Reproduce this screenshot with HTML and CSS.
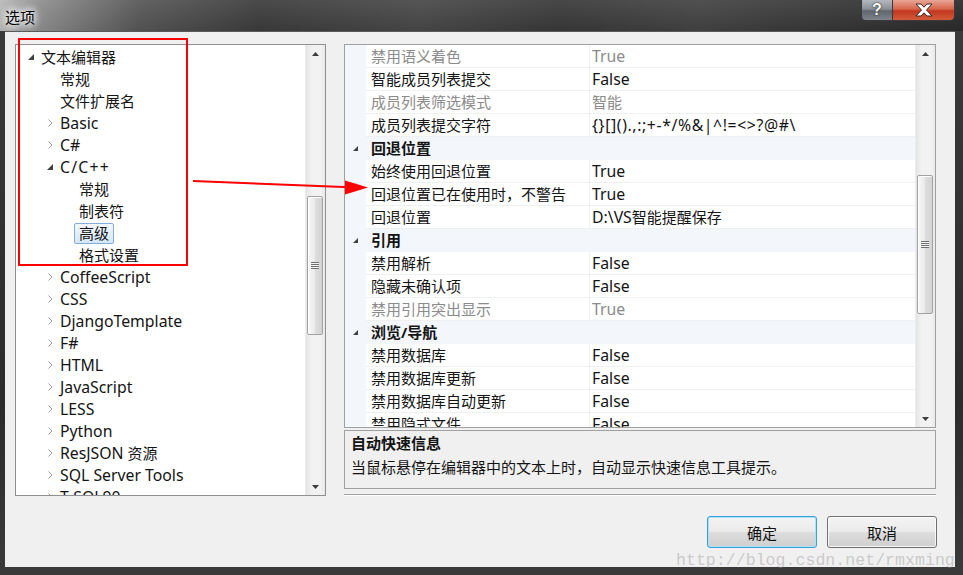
FILE: index.html
```html
<!DOCTYPE html>
<html lang="zh-CN">
<head>
<meta charset="utf-8">
<title>选项</title>
<link rel="stylesheet" href="styles.css">
</head>
<body>
<div class="window">
  <div class="titlebar">
    <span class="title">选项</span>
    <div class="caps">
      <div class="cap-help">?</div>
      <div class="cap-close">
        <svg width="20" height="14" viewBox="0 0 20 14"><path d="M2 1h5l3 3.2 3-3.2h5l-5.5 6 5.5 6h-5l-3-3.2-3 3.2h-5l5.5-6z" fill="#fff" stroke="#3a2a28" stroke-width="1"/></svg>
      </div>
    </div>
  </div>
  <div class="frame">
    <div class="client">
      <div class="main">
        <div class="tree-panel">
          <div class="tree">
            <div class="row l0"><span class="exp"><svg width="6" height="6" viewBox="0 0 6 6"><polygon points="6,0 6,6 0,6" fill="#404040"/></svg></span><span class="lbl">文本编辑器</span></div>
            <div class="row l1"><span class="exp"></span><span class="lbl">常规</span></div>
            <div class="row l1"><span class="exp"></span><span class="lbl">文件扩展名</span></div>
            <div class="row l1"><span class="exp"><svg class="chev" width="5" height="8" viewBox="0 0 5 8"><polyline points="0.5,0.5 4,4 0.5,7.5" fill="none" stroke="#9a9a9a" stroke-width="1"/></svg></span><span class="lbl en">Basic</span></div>
            <div class="row l1"><span class="exp"><svg class="chev" width="5" height="8" viewBox="0 0 5 8"><polyline points="0.5,0.5 4,4 0.5,7.5" fill="none" stroke="#9a9a9a" stroke-width="1"/></svg></span><span class="lbl en">C#</span></div>
            <div class="row l1"><span class="exp"><svg width="6" height="6" viewBox="0 0 6 6"><polygon points="6,0 6,6 0,6" fill="#404040"/></svg></span><span class="lbl en wide">C/C++</span></div>
            <div class="row l2"><span class="exp"></span><span class="lbl">常规</span></div>
            <div class="row l2"><span class="exp"></span><span class="lbl">制表符</span></div>
            <div class="row l2"><span class="exp"></span><span class="lbl selected">高级</span></div>
            <div class="row l2"><span class="exp"></span><span class="lbl">格式设置</span></div>
            <div class="row l1"><span class="exp"><svg class="chev" width="5" height="8" viewBox="0 0 5 8"><polyline points="0.5,0.5 4,4 0.5,7.5" fill="none" stroke="#9a9a9a" stroke-width="1"/></svg></span><span class="lbl en">CoffeeScript</span></div>
            <div class="row l1"><span class="exp"><svg class="chev" width="5" height="8" viewBox="0 0 5 8"><polyline points="0.5,0.5 4,4 0.5,7.5" fill="none" stroke="#9a9a9a" stroke-width="1"/></svg></span><span class="lbl en">CSS</span></div>
            <div class="row l1"><span class="exp"><svg class="chev" width="5" height="8" viewBox="0 0 5 8"><polyline points="0.5,0.5 4,4 0.5,7.5" fill="none" stroke="#9a9a9a" stroke-width="1"/></svg></span><span class="lbl en">DjangoTemplate</span></div>
            <div class="row l1"><span class="exp"><svg class="chev" width="5" height="8" viewBox="0 0 5 8"><polyline points="0.5,0.5 4,4 0.5,7.5" fill="none" stroke="#9a9a9a" stroke-width="1"/></svg></span><span class="lbl en">F#</span></div>
            <div class="row l1"><span class="exp"><svg class="chev" width="5" height="8" viewBox="0 0 5 8"><polyline points="0.5,0.5 4,4 0.5,7.5" fill="none" stroke="#9a9a9a" stroke-width="1"/></svg></span><span class="lbl en">HTML</span></div>
            <div class="row l1"><span class="exp"><svg class="chev" width="5" height="8" viewBox="0 0 5 8"><polyline points="0.5,0.5 4,4 0.5,7.5" fill="none" stroke="#9a9a9a" stroke-width="1"/></svg></span><span class="lbl en">JavaScript</span></div>
            <div class="row l1"><span class="exp"><svg class="chev" width="5" height="8" viewBox="0 0 5 8"><polyline points="0.5,0.5 4,4 0.5,7.5" fill="none" stroke="#9a9a9a" stroke-width="1"/></svg></span><span class="lbl en">LESS</span></div>
            <div class="row l1"><span class="exp"><svg class="chev" width="5" height="8" viewBox="0 0 5 8"><polyline points="0.5,0.5 4,4 0.5,7.5" fill="none" stroke="#9a9a9a" stroke-width="1"/></svg></span><span class="lbl en">Python</span></div>
            <div class="row l1"><span class="exp"><svg class="chev" width="5" height="8" viewBox="0 0 5 8"><polyline points="0.5,0.5 4,4 0.5,7.5" fill="none" stroke="#9a9a9a" stroke-width="1"/></svg></span><span class="lbl"><span class="en">ResJSON</span> 资源</span></div>
            <div class="row l1"><span class="exp"><svg class="chev" width="5" height="8" viewBox="0 0 5 8"><polyline points="0.5,0.5 4,4 0.5,7.5" fill="none" stroke="#9a9a9a" stroke-width="1"/></svg></span><span class="lbl en">SQL Server Tools</span></div>
            <div class="row l1"><span class="exp"><svg class="chev" width="5" height="8" viewBox="0 0 5 8"><polyline points="0.5,0.5 4,4 0.5,7.5" fill="none" stroke="#9a9a9a" stroke-width="1"/></svg></span><span class="lbl en">T-SQL90</span></div>
          </div>
          <div class="vscroll">
            <div class="sb-btn"><svg width="7" height="4" viewBox="0 0 7 4"><polygon points="3.5,0 7,4 0,4" fill="#3d3d3d"/></svg></div>
            <div class="sb-track">
              <div class="thumb tree-thumb"><span class="grip"></span></div>
            </div>
            <div class="sb-btn"><svg width="7" height="4" viewBox="0 0 7 4"><polygon points="0,0 7,0 3.5,4" fill="#3d3d3d"/></svg></div>
          </div>
        </div>
        <div class="right">
          <div class="grid-panel">
            <div class="grid">
              <div class="prow dis"><div class="gut"></div><div class="name">禁用语义着色</div><div class="val en">True</div></div>
              <div class="prow"><div class="gut"></div><div class="name">智能成员列表提交</div><div class="val en">False</div></div>
              <div class="prow dis"><div class="gut"></div><div class="name">成员列表筛选模式</div><div class="val">智能</div></div>
              <div class="prow"><div class="gut"></div><div class="name">成员列表提交字符</div><div class="val en sym">{}[]().,:;+-*/%&amp;|^!=&lt;&gt;?@#\</div></div>
              <div class="crow"><div class="gut"><svg width="5" height="5" viewBox="0 0 5 5"><polygon points="5,0 5,5 0,5" fill="#404040"/></svg></div><div class="cname">回退位置</div></div>
              <div class="prow"><div class="gut"></div><div class="name">始终使用回退位置</div><div class="val en">True</div></div>
              <div class="prow"><div class="gut"></div><div class="name">回退位置已在使用时，不警告</div><div class="val en">True</div></div>
              <div class="prow"><div class="gut"></div><div class="name">回退位置</div><div class="val"><span class="en">D:\VS</span>智能提醒保存</div></div>
              <div class="crow"><div class="gut"><svg width="5" height="5" viewBox="0 0 5 5"><polygon points="5,0 5,5 0,5" fill="#404040"/></svg></div><div class="cname">引用</div></div>
              <div class="prow"><div class="gut"></div><div class="name">禁用解析</div><div class="val en">False</div></div>
              <div class="prow"><div class="gut"></div><div class="name">隐藏未确认项</div><div class="val en">False</div></div>
              <div class="prow dis"><div class="gut"></div><div class="name">禁用引用突出显示</div><div class="val en">True</div></div>
              <div class="crow"><div class="gut"><svg width="5" height="5" viewBox="0 0 5 5"><polygon points="5,0 5,5 0,5" fill="#404040"/></svg></div><div class="cname">浏览/导航</div></div>
              <div class="prow"><div class="gut"></div><div class="name">禁用数据库</div><div class="val en">False</div></div>
              <div class="prow"><div class="gut"></div><div class="name">禁用数据库更新</div><div class="val en">False</div></div>
              <div class="prow"><div class="gut"></div><div class="name">禁用数据库自动更新</div><div class="val en">False</div></div>
              <div class="prow"><div class="gut"></div><div class="name">禁用隐式文件</div><div class="val en">False</div></div>
            </div>
            <div class="vscroll">
              <div class="sb-btn"><svg width="7" height="4" viewBox="0 0 7 4"><polygon points="3.5,0 7,4 0,4" fill="#3d3d3d"/></svg></div>
              <div class="sb-track">
                <div class="thumb grid-thumb"><span class="grip"></span></div>
              </div>
              <div class="sb-btn"><svg width="7" height="4" viewBox="0 0 7 4"><polygon points="0,0 7,0 3.5,4" fill="#3d3d3d"/></svg></div>
            </div>
          </div>
          <div class="desc">
            <div class="desc-title">自动快速信息</div>
            <div class="desc-text">当鼠标悬停在编辑器中的文本上时，自动显示快速信息工具提示。</div>
          </div>
          <div class="sep"></div>
        </div>
      </div>
      <div class="buttons">
        <button class="btn default">确定</button>
        <button class="btn">取消</button>
      </div>
    </div>
  </div>
  <div class="watermark">http://blog.csdn.net/rmxming</div>
  <div class="annot-rect"></div>
  <svg class="annot-arrow" width="963" height="575" viewBox="0 0 963 575">
    <line x1="193" y1="181" x2="350" y2="187.3" stroke="#f00" stroke-width="2"/>
    <polygon points="345,180.5 368,187.5 345,194.5" fill="#f00"/>
  </svg>
</div>
</body>
</html>
```
FILE: styles.css
```css
* { box-sizing: border-box; }

html, body {
  margin: 0;
  padding: 0;
}

body {
  width: 963px;
  height: 575px;
  overflow: hidden;
  background: #2d2d2d;
  font-family: "Noto Sans", "Noto Sans CJK SC", sans-serif;
  font-size: 15px;
  color: #141414;
}

.en { font-size: 15.8px; }
.wide { letter-spacing: 1.2px; }
.sym { letter-spacing: 0.6px; }

.window {
  position: relative;
  width: 963px;
  height: 575px;
  display: flex;
  flex-direction: column;
  background: linear-gradient(to bottom, #3b3b3b, #2c2c2c 70%, #3a3a3a);
}

.titlebar {
  height: 31px;
  flex: none;
  display: flex;
  justify-content: space-between;
  align-items: flex-start;
  padding: 0 8px 0 5px;
  background:
    linear-gradient(to bottom, rgba(255,255,255,0.08), rgba(0,0,0,0.05)),
    linear-gradient(to right, #b9b9b9 0px, #8d8d8d 40px, #555 140px, #3b3b3b 260px, #474747 420px, #383838 560px, #424242 700px, #333 860px, #2a2a2a 963px);
}

.title {
  padding-top: 7px;
  line-height: 20px;
  font-size: 15px;
  color: #000;
  font-family: "Noto Sans CJK SC", sans-serif;
  text-shadow: 0 0 6px #fff, 0 0 8px #fff, 0 0 10px rgba(255,255,255,0.9);
}

.caps {
  display: flex;
  height: 21px;
  border: 1px solid #3a3a3a;
  border-top: none;
  border-radius: 0 0 5px 5px;
  overflow: hidden;
}

.cap-help {
  width: 31px;
  display: flex;
  justify-content: center;
  align-items: center;
  color: #fff;
  font-weight: bold;
  font-size: 16px;
  font-family: "Liberation Sans", sans-serif;
  text-shadow: 0 0 2px #333, 0 0 1px #222;
  background: linear-gradient(to bottom, #b4b9c0 0%, #8a9098 45%, #60666e 55%, #7e848c 100%);
  border-right: 1px solid #3a3a3a;
}

.cap-close {
  width: 61px;
  display: flex;
  justify-content: center;
  align-items: center;
  background: linear-gradient(to bottom, #e9a696 0%, #d7664b 45%, #c2371f 55%, #d45a3a 100%);
}

.frame {
  flex: 1;
  display: flex;
  padding: 0 8px 8px 5px;
}

.client {
  flex: 1;
  display: flex;
  flex-direction: column;
  background: #f0f0f0;
  border-top: 1px solid #5a5a5a;
  padding: 12px 19px 19px 10px;
}

.main {
  height: 452px;
  flex: none;
  display: flex;
  gap: 18px;
}

/* tree */
.tree-panel {
  width: 311px;
  flex: none;
  display: flex;
  background: #fff;
  border: 1px solid #8e9093;
}

.tree {
  flex: 1;
  overflow: hidden;
  padding-top: 1px;
}

.row {
  height: 22px;
  display: flex;
  align-items: center;
  white-space: nowrap;
}

.row.l0 { padding-left: 0; }
.row.l1 { padding-left: 19px; }
.row.l2 { padding-left: 38px; }

.exp {
  width: 20px;
  height: 22px;
  flex: none;
  display: flex;
  align-items: center;
  padding-left: 12px;
}

.exp .chev { margin-left: 1px; }

.lbl {
  height: 21px;
  line-height: 19px;
  padding: 0 4px;
  border: 1px solid transparent;
  border-radius: 2px;
}

.lbl.selected {
  border-color: #84acdd;
  background: linear-gradient(to bottom, #f1f7fe, #d5e7fc);
}

/* scrollbars */
.vscroll {
  width: 20px;
  flex: none;
  display: flex;
  flex-direction: column;
  background: linear-gradient(to right, #e4e4e4, #f2f2f2 30%, #f2f2f2 80%, #e9e9e9);
  border-left: 1px solid #ececec;
}

.sb-btn {
  height: 17px;
  flex: none;
  display: flex;
  align-items: center;
  justify-content: center;
}

.sb-track {
  flex: 1;
}

.thumb {
  margin: 0 2px 0 1px;
  border: 1px solid #a2a2a2;
  border-radius: 2px;
  background: linear-gradient(to right, #f6f6f6, #ececec 45%, #dcdcdc 55%, #d4d4d4);
  box-shadow: inset 1px 1px 0 #fff;
  display: flex;
  align-items: center;
  justify-content: center;
}

.tree-thumb { margin-top: 134px; height: 139px; }
.grid-thumb { margin-top: 113px; height: 139px; }

.grip {
  width: 8px;
  height: 7px;
  background: repeating-linear-gradient(to bottom, #6f6f6f 0, #6f6f6f 1px, #f4f4f4 1px, #f4f4f4 2px);
}

/* right column */
.right {
  flex: 1;
  display: flex;
  flex-direction: column;
}

.grid-panel {
  height: 384px;
  flex: none;
  display: flex;
  background: #fff;
  border: 1px solid #a0a0a0;
}

.grid {
  flex: 1;
  overflow: hidden;
}

.prow, .crow {
  height: 23px;
  display: flex;
  white-space: nowrap;
}

.gut {
  width: 21px;
  flex: none;
  background: #f3f6fb;
  display: flex;
  align-items: center;
  padding-left: 8px;
}

.name {
  width: 224px;
  flex: none;
  padding-left: 5px;
  line-height: 22px;
  border-right: 1px solid #f0f0f0;
  border-bottom: 1px solid #eff0f2;
}

.val {
  flex: 1;
  padding-left: 2px;
  line-height: 22px;
  border-bottom: 1px solid #eff0f2;
}

.prow.dis { color: #8b8b8b; }

.crow { background: #f3f6fb; }

.cname {
  flex: 1;
  padding-left: 5px;
  line-height: 23px;
  font-weight: bold;
}

.desc {
  margin-top: 2px;
  height: 59px;
  flex: none;
  border: 1px solid #a0a0a0;
  padding: 2px 6px;
}

.desc-title {
  font-weight: bold;
  line-height: 20px;
}

.desc-text {
  margin-top: 4px;
  line-height: 20px;
}

.sep {
  margin-top: 5px;
  height: 2px;
  flex: none;
  border-top: 1px solid #a0a0a0;
  border-bottom: 1px solid #fff;
}

.buttons {
  margin-top: 20px;
  display: flex;
  justify-content: flex-end;
  gap: 10px;
  margin-right: -1px;
}

.btn {
  width: 110px;
  height: 32px;
  font-family: "Noto Sans CJK SC", sans-serif;
  font-size: 15px;
  color: #111;
  border: 1px solid #707070;
  border-radius: 3px;
  background: linear-gradient(to bottom, #f3f3f3 0%, #ebebeb 48%, #dddddd 52%, #cfcfcf 100%);
  box-shadow: inset 0 0 0 1px rgba(255,255,255,0.8);
  padding: 0;
}

.btn.default {
  border-color: #3c9fd8;
  box-shadow: inset 0 0 0 1px #a8e3fb;
}

.watermark {
  position: absolute;
  left: 676px;
  top: 552px;
  font-family: "Liberation Mono", monospace;
  font-size: 16.6px;
  line-height: 17px;
  color: rgba(140, 140, 140, 0.4);
  white-space: nowrap;
}

.annot-rect {
  position: absolute;
  left: 18px;
  top: 38px;
  width: 170px;
  height: 228px;
  border: 2px solid #f00;
}

.annot-arrow {
  position: absolute;
  left: 0;
  top: 0;
  pointer-events: none;
}
```
